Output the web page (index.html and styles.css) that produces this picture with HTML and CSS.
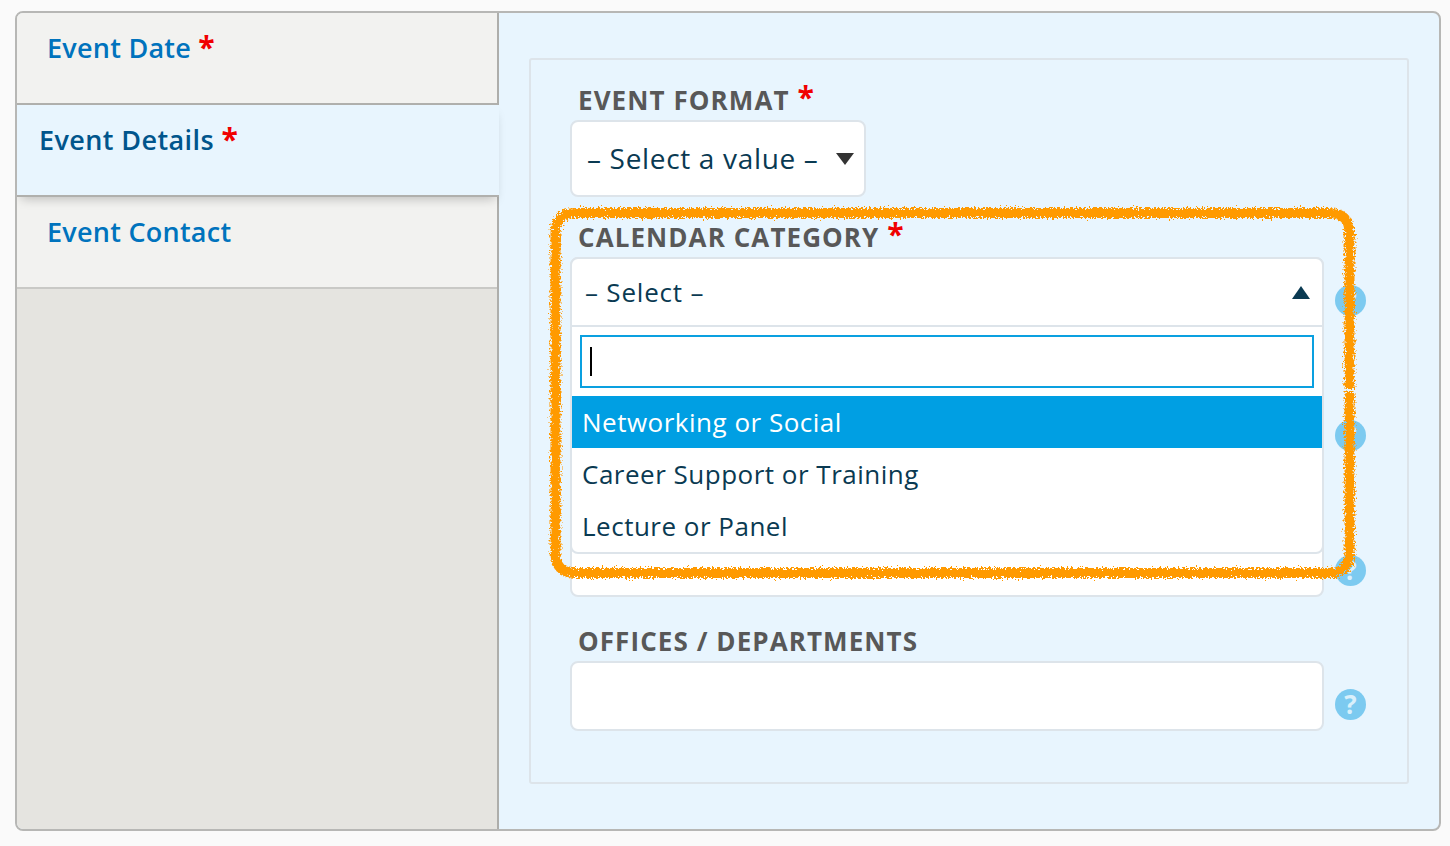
FILE: index.html
```html
<!DOCTYPE html>
<html lang="en">
<head>
<meta charset="utf-8">
<title>Event form</title>
<link rel="stylesheet" href="styles.css">
</head>
<body>
<div class="shell">
  <nav class="tabs">
    <a class="tab">Event Date <span class="req">*</span></a>
    <a class="tab active">Event Details <span class="req">*</span></a>
    <a class="tab last">Event Contact</a>
  </nav>
  <main class="pane">
    <section class="panel">
      <div class="field first">
        <div class="label">EVENT FORMAT <span class="req">*</span></div>
        <div class="select small"><span class="select-text">– Select a value –</span><span class="down"></span></div>
      </div>
      <div class="field">
        <div class="label">CALENDAR CATEGORY <span class="req">*</span></div>
        <div class="row">
          <div class="box"></div><span class="help">?</span>
        </div>
        <div class="dropdown">
          <div class="dd-head"><span>– Select –</span><span class="up"></span></div>
          <div class="dd-search"><div class="search"><span class="caret"></span></div></div>
          <div class="opt on">Networking or Social</div>
          <div class="opt">Career Support or Training</div>
          <div class="opt">Lecture or Panel</div>
        </div>
      </div>
      <div class="field">
        <div class="label">&nbsp;</div>
        <div class="row"><div class="box"></div><span class="help">?</span></div>
      </div>
      <div class="field">
        <div class="label">&nbsp;</div>
        <div class="row"><div class="box"></div><span class="help">?</span></div>
      </div>
      <div class="field">
        <div class="label">OFFICES / DEPARTMENTS</div>
        <div class="row"><div class="box"></div><span class="help">?</span></div>
      </div>
    </section>
  </main>
</div>
<svg class="scribble" width="1450" height="846" viewBox="0 0 1450 846" aria-hidden="true">
  <defs>
    <filter id="rough" x="-5%" y="-5%" width="110%" height="110%">
      <feTurbulence type="fractalNoise" baseFrequency="0.55" numOctaves="3" seed="4" result="n"/>
      <feDisplacementMap in="SourceGraphic" in2="n" scale="9"/>
    </filter>
  </defs>
  <path d="M1349.500 389 V233 Q1349.500 213 1329 213 H575 Q555.500 213 555.500 233 V553 Q555.500 573 575 573 H1329 Q1349.500 573 1349.500 553 V392" fill="none" stroke="#ff9a00" stroke-width="10" filter="url(#rough)"/>
</svg>
</body>
</html>
```
FILE: styles.css
```css
* { box-sizing: border-box; }
html, body { margin: 0; height: 846px; overflow: hidden; }
body {
  position: relative;
  background: #fafafa;
  padding: 11px 9px 16px 15px;
  font-family: "Open Sans", "DejaVu Sans", sans-serif;
}
.shell {
  display: flex;
  height: 820px;
  border: 2px solid #b7b7b5;
  border-radius: 8px;
  background: #e8f5fe;
  overflow: hidden;
}
.tabs {
  flex: 0 0 482px;
  min-width: 0;
  background: #e5e4e0;
  border-right: 2px solid #aeaeab;
  display: flex;
  flex-direction: column;
}
.tab {
  display: block;
  height: 92px;
  padding: 16px 0 0 30px;
  background: #f2f2f0;
  border-bottom: 2px solid #b0b0ad;
  color: #0073bd;
  font-size: 27px;
  line-height: 38px;
  font-weight: 600;
  letter-spacing: .25px;
}
.tab.active {
  position: relative;
  flex: none;
  width: 482px;
  padding-left: 22px;
  background: #e8f5fe;
  color: #00558c;
  letter-spacing: .4px;
  box-shadow: 0 6px 10px -4px rgba(0,0,0,.22);
}
.tab.last { border-bottom-color: #c9c9c6; }
.req {
  color: #f00000;
  font-size: 30px;
  line-height: 0;
  font-weight: 700;
  position: relative;
  top: 0;
  letter-spacing: 0;
}
.pane { flex: 1; min-width: 0; padding: 45px 30px 0 30px; }
.panel {
  height: 726px;
  padding: 25px 0 0 39px;
  border: 2px solid #dde4ea;
  border-radius: 3px;
}
.field { position: relative; margin-top: 29.8px; }
.field.first { margin-top: 0; }
.field.first + .field { margin-top: 25px; }
.label {
  height: 30px;
  line-height: 30px;
  margin: 0 0 5px 8px;
  color: #585858;
  font-size: 26px;
  font-weight: 700;
  letter-spacing: 1.08px;
}
.label .req { top: -2px; }
.select, .box, .dropdown { background: #fff; border: 2px solid #dde4ea; border-radius: 8px; }
.select {
  display: flex;
  align-items: center;
  width: 296px;
  height: 77px;
  padding: 0 10px 0 15px;
  color: #0a3a52;
  font-size: 28px;
}
.select-text { letter-spacing: .67px; margin-top: -2px; }
.down {
  margin-left: auto;
  border: 9px solid transparent;
  border-top: 12px solid #333;
  border-bottom: 0;
}
.row { display: flex; align-items: flex-start; gap: 11px; }
.box { width: 754px; height: 70px; }
.help {
  flex: none;
  width: 31px;
  height: 31px;
  margin-top: 28px;
  border-radius: 50%;
  background: #7ccaf0;
  color: #d9f0fb;
  font-size: 26px;
  line-height: 31px;
  font-weight: 700;
  text-align: center;
}
.dropdown {
  position: absolute;
  left: 0;
  top: 35px;
  z-index: 2;
  width: 754px;
  height: 297px;
  overflow: hidden;
  color: #0a3a52;
  font-size: 26px;
}
.dd-head {
  display: flex;
  justify-content: space-between;
  align-items: center;
  height: 68px;
  padding: 0 12px 0 13px;
  border-bottom: 2px solid #dde4ea;
  letter-spacing: .8px;
}
.up {
  border: 9px solid transparent;
  border-bottom: 13px solid #0a3a52;
  border-top: 0;
}
.dd-search { padding: 8px; }
.search { height: 53px; border: 2px solid #0aa0e0; padding: 10px 8px; }
.caret { display: block; width: 2px; height: 29px; background: #000; }
.opt { height: 52px; line-height: 52px; padding-left: 10px; letter-spacing: .5px; }
.opt.on { background: #009fe3; color: #fff; }
.scribble { position: absolute; left: 0; top: 0; z-index: 5; pointer-events: none; }
```
